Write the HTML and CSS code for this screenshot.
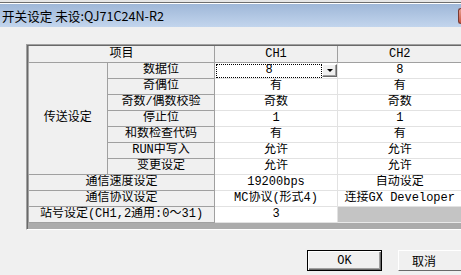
FILE: index.html
```html
<!DOCTYPE html>
<html>

<head>
    <title>开关设定</title>
    <link rel="stylesheet" href="styles.css">
</head>

<body>
    <div class="topstrip"></div>
    <header class="titlebar">
        <span class="title">开关设定 未设:QJ71C24N-R2</span>
        <span class="close"></span>
    </header>

    <main class="content">
        <div class="gridframe">
            <table class="grid">
                <colgroup>
                    <col class="c1">
                    <col class="c2">
                    <col class="c3">
                    <col class="c4">
                </colgroup>
                <tr class="head">
                    <th colspan="2">项目</th>
                    <th>CH1</th>
                    <th>CH2</th>
                </tr>
                <tr>
                    <th rowspan="7">传送设定</th>
                    <th>数据位</th>
                    <td class="editcell">
                        <div class="combo">
                            <span class="focus">8</span>
                            <span class="drop"><i class="arrow"></i></span>
                        </div>
                    </td>
                    <td>8</td>
                </tr>
                <tr>
                    <th>奇偶位</th>
                    <td>有</td>
                    <td>有</td>
                </tr>
                <tr>
                    <th>奇数/偶数校验</th>
                    <td>奇数</td>
                    <td>奇数</td>
                </tr>
                <tr>
                    <th>停止位</th>
                    <td>1</td>
                    <td>1</td>
                </tr>
                <tr>
                    <th>和数检查代码</th>
                    <td>有</td>
                    <td>有</td>
                </tr>
                <tr>
                    <th>RUN中写入</th>
                    <td>允许</td>
                    <td>允许</td>
                </tr>
                <tr>
                    <th>变更设定</th>
                    <td>允许</td>
                    <td>允许</td>
                </tr>
                <tr>
                    <th colspan="2">通信速度设定</th>
                    <td>19200bps</td>
                    <td>自动设定</td>
                </tr>
                <tr>
                    <th colspan="2">通信协议设定</th>
                    <td>MC协议(形式4)</td>
                    <td>连接GX Developer</td>
                </tr>
                <tr>
                    <th colspan="2">站号设定(CH1,2通用:0～31)</th>
                    <td>3</td>
                    <td class="disabled"></td>
                </tr>
            </table>
        </div>

        <div class="buttons">
            <button class="btn default">OK</button>
            <button class="btn cut">取消</button>
        </div>
    </main>
</body>

</html>
```

FILE: styles.css
```css
body {
    margin: 0;
    background-color: #f0f0f0;
    font-family: 'Liberation Mono', 'Noto Sans CJK SC', monospace;
    font-size: 12px;
    color: #000;
    overflow: hidden;
}

.topstrip {
    height: 4px;
    box-sizing: border-box;
    background-color: #fff;
    border-top: 2px solid #e6e6e6;
    box-shadow: inset 0 1px 0 #6e6e6e;
}

.titlebar {
    height: 23px;
    display: flex;
    align-items: center;
    justify-content: space-between;
    background: linear-gradient(#9fb7d8, #c2d5ed);
}

.title {
    padding-left: 2px;
    font-family: 'Noto Sans CJK SC', sans-serif;
    font-size: 12.6px;
    line-height: 14px;
}

/* only the left sliver of the close button is on screen */
.close {
    width: 3px;
    height: 16px;
    box-sizing: border-box;
    border: 1px solid #7a3b33;
    border-right: none;
    border-radius: 3px 0 0 3px;
    background: linear-gradient(#e8a193, #c7543d);
}

.content {
    padding: 17px 0 0 26px;
}

.gridframe {
    height: 186px;
    box-sizing: border-box;
    border-top: 1px solid #a0a0a0;
    border-left: 1px solid #a0a0a0;
    border-bottom: 1px solid #fff;
    background-color: #ababab;
    box-shadow: inset 1px 1px 0 #696969;
    padding: 1px 0 0 1px;
    overflow: hidden;
}

.grid {
    border-collapse: collapse;
    table-layout: fixed;
    width: 433px;
}

.c1 {
    width: 79px;
}

.c2 {
    width: 107px;
}

.c3 {
    width: 123px;
}

.c4 {
    width: 124px;
}

.grid th,
.grid td {
    height: 15px;
    padding: 0;
    line-height: 13px;
    text-align: center;
    font-weight: normal;
    white-space: nowrap;
    overflow: hidden;
}

.grid th {
    background-color: #f0f0f0;
    border: 1px solid #a0a0a0;
}

.grid td {
    background-color: #fff;
    border: 1px solid #e2e2e2;
}

.grid .head th {
    height: 16px;
}

.grid tr:first-child th {
    border-top: none;
}

.grid tr > :last-child {
    border-right: none;
}

.grid th[rowspan] {
    border-left: none;
}

.grid td.disabled {
    background-color: #c4c4c4;
    border-color: #e8e8e8;
    border-right: none;
}

.combo {
    display: flex;
    height: 14px;
    padding-left: 1px;
}

.focus {
    flex: 1;
    outline: 1px dotted #000;
    outline-offset: -1px;
    line-height: 13px;
}

.drop {
    width: 15px;
    height: 13px;
    box-sizing: border-box;
    display: flex;
    align-items: center;
    justify-content: center;
    background-color: #f0f0f0;
    border: 1px solid;
    border-color: #fff #696969 #696969 #fff;
    box-shadow: inset -1px -1px 0 #a0a0a0;
}

.arrow {
    width: 0;
    height: 0;
    border-left: 3px solid transparent;
    border-right: 3px solid transparent;
    border-top: 3px solid #000;
    margin-top: 1px;
}

.buttons {
    display: flex;
    justify-content: flex-end;
    gap: 16px;
    margin-top: 20px;
}

.btn {
    width: 75px;
    height: 21px;
    padding: 0;
    font-family: 'Liberation Mono', 'Noto Sans CJK SC', monospace;
    font-size: 12px;
    background-color: #f0f0f0;
    border: 1px solid;
    border-color: #fff #696969 #696969 #fff;
    box-shadow: inset -1px -1px 0 #a0a0a0;
}

.btn.default {
    border-color: #000;
    box-shadow: inset 1px 1px 0 #fff, inset -1px -1px 0 #696969, inset -2px -2px 0 #a0a0a0;
}

/* the cancel button runs off the window edge */
.btn.cut {
    width: 63px;
    padding-right: 12px;
    border-right: none;
    box-shadow: none;
}
```
